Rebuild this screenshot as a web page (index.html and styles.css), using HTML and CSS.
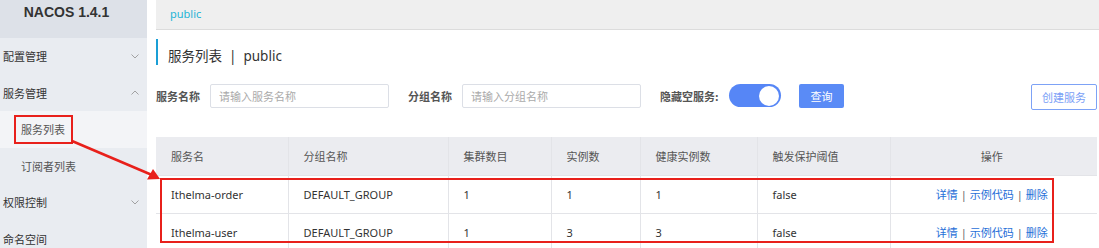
FILE: index.html
```html
<!DOCTYPE html>
<html lang="zh-CN">
<head>
    <meta charset="UTF-8">
    <title>Nacos 服务列表</title>
    <link rel="stylesheet" href="styles.css">
</head>
<body>
    <div class="page">
        <aside class="side">
            <div class="logo">NACOS 1.4.1</div>
            <ul class="menu">
                <li class="item">配置管理<svg class="chev" viewBox="0 0 8 5"><path d="M0.5 0.5 L4 4 L7.5 0.5"/></svg></li>
                <li class="item">服务管理<svg class="chev" viewBox="0 0 8 5"><path d="M0.5 4.5 L4 1 L7.5 4.5"/></svg></li>
                <li class="sub on">服务列表</li>
                <li class="sub">订阅者列表</li>
                <li class="item">权限控制<svg class="chev" viewBox="0 0 8 5"><path d="M0.5 0.5 L4 4 L7.5 0.5"/></svg></li>
                <li class="item">命名空间</li>
            </ul>
        </aside>
        <main class="main">
            <div class="topbar"><span class="ns">public</span></div>
            <h2 class="title">服务列表 &nbsp;|&nbsp; public</h2>
            <div class="filter">
                <label class="lbl">服务名称</label>
                <input class="ipt" type="text" placeholder="请输入服务名称">
                <label class="lbl lbl2">分组名称</label>
                <input class="ipt" type="text" placeholder="请输入分组名称">
                <label class="lbl lbl3">隐藏空服务:</label>
                <span class="switch"><span class="knob"></span></span>
                <button class="btn-query">查询</button>
                <button class="btn-create">创建服务</button>
            </div>
            <table class="grid">
                <colgroup>
                    <col style="width:132px">
                    <col style="width:160px">
                    <col style="width:103px">
                    <col style="width:89px">
                    <col style="width:117px">
                    <col style="width:133px">
                    <col>
                </colgroup>
                <thead>
                    <tr>
                        <th>服务名</th>
                        <th>分组名称</th>
                        <th>集群数目</th>
                        <th>实例数</th>
                        <th>健康实例数</th>
                        <th>触发保护阈值</th>
                        <th class="ops">操作</th>
                    </tr>
                </thead>
                <tbody>
                    <tr>
                        <td>Ithelma-order</td>
                        <td>DEFAULT_GROUP</td>
                        <td>1</td>
                        <td>1</td>
                        <td>1</td>
                        <td>false</td>
                        <td class="ops"><a>详情</a><i>|</i><a>示例代码</a><i>|</i><a>删除</a></td>
                    </tr>
                    <tr>
                        <td>Ithelma-user</td>
                        <td>DEFAULT_GROUP</td>
                        <td>1</td>
                        <td>3</td>
                        <td>3</td>
                        <td>false</td>
                        <td class="ops"><a>详情</a><i>|</i><a>示例代码</a><i>|</i><a>删除</a></td>
                    </tr>
                </tbody>
            </table>
        </main>
        <!-- 标注：红框和箭头 -->
        <svg class="marks" width="1099" height="248" viewBox="0 0 1099 248">
            <rect x="15" y="116" width="57" height="27" />
            <rect x="161" y="179" width="892" height="63" />
            <line x1="72" y1="141" x2="152" y2="175" />
            <path class="head" d="M160 179 L147 179.5 L153 169 Z"/>
        </svg>
    </div>
</body>
</html>
```

FILE: styles.css
```css
*{padding: 0;margin: 0;box-sizing: border-box;}
ul,li{list-style: none;}
body{
    font-family: "Noto Sans", "Noto Sans CJK SC", sans-serif;
    font-size: 11px;
    color: #333;
    background: #fff;
}
.page{
    position: relative;
    width: 1099px;
    height: 248px;
    overflow: hidden;
    display: flex;
}

/* 左侧菜单 */
.side{
    width: 147px;
    flex: none;
    background: #e9ecf1;
}
.logo{
    height: 38px;
    background: #dde1e8;
    text-align: center;
    font-family: "Liberation Sans", "Noto Sans", sans-serif;
    font-weight: bold;
    font-size: 14px;
    color: #333;
    padding: 4px 14px 0 0;
}
.menu li{
    height: 36.5px;
    display: flex;
    align-items: center;
    justify-content: space-between;
    font-family: "Noto Sans CJK SC", sans-serif;
    font-size: 11px;
    color: #333;
    padding: 0 8px 0 3px;
}
.menu .sub{
    padding-left: 21px;
    color: #555;
}
.menu .on{
    background: #f3f4f7;
}
.chev{
    width: 8px;
    height: 5px;
    fill: none;
    stroke: #999;
    stroke-width: 0.9;
}

/* 右侧主体 */
.main{
    flex: 1;
    padding: 0 2px 0 9px;
}
.topbar{
    height: 30px;
    background: #efefef;
    border-bottom: 1px solid #dcdcdc;
    padding: 6px 0 0 14px;
    margin-right: -2px;
}
.ns{
    color: #1db4d6;
    font-size: 11px;
}
.title{
    margin-top: 9px;
    height: 26px;
    border-left: 2px solid #1a9fd6;
    padding: 8px 0 0 10px;
    font-family: "Noto Sans", "Noto Sans CJK SC", sans-serif;
    font-weight: normal;
    font-size: 13.5px;
    line-height: 18px;
    color: #333;
}
.filter{
    margin-top: 19px;
    height: 26px;
    display: flex;
    align-items: flex-start;
}
.lbl{
    font-family: "Noto Sans CJK SC", sans-serif;
    font-weight: bold;
    font-size: 11px;
    color: #555;
    line-height: 24px;
    width: 54px;
    white-space: nowrap;
}
.lbl2{margin-left: 19px;}
.lbl3{margin-left: 19px;width: 69px;}
.ipt{
    width: 179px;
    height: 24px;
    border: 1px solid #dcdfe6;
    border-radius: 2px;
    padding: 0 8px;
    font-family: "Noto Sans CJK SC", sans-serif;
    font-size: 11px;
    outline: none;
}
.ipt::placeholder{color: #aaa;}
.switch{
    width: 52px;
    height: 23px;
    border-radius: 12px;
    background: #5686f6;
    display: flex;
    justify-content: flex-end;
    align-items: center;
    padding-right: 2px;
}
.knob{
    width: 20px;
    height: 20px;
    border-radius: 50%;
    background: #fff;
}
.btn-query{
    margin-left: 18px;
    width: 45px;
    height: 24px;
    border: none;
    border-radius: 2px;
    background: #5a8bf6;
    color: #fff;
    font-family: "Noto Sans CJK SC", sans-serif;
    font-size: 11px;
}
.btn-create{
    margin-left: auto;
    width: 66px;
    height: 26px;
    border: 1px solid #7da2f6;
    border-radius: 2px;
    background: #fff;
    color: #7aa0f6;
    font-family: "Noto Sans CJK SC", sans-serif;
    font-size: 11px;
}

/* 表格 */
.grid{
    margin-top: 27px;
    width: 941px;
    table-layout: fixed;
    border-collapse: collapse;
}
.grid th, .grid td{
    height: 38px;
    padding: 0 0 0 15px;
    text-align: left;
    font-size: 11px;
    border-left: 1px solid #e3e4e8;
    border-bottom: 1px solid #e3e4e8;
    white-space: nowrap;
}
.grid th{
    background: #ebecf0;
    font-family: "Noto Sans CJK SC", sans-serif;
    font-weight: normal;
    color: #555;
}
.grid td{color: #333;}
.grid th:first-child, .grid td:first-child{border-left: none;}
.grid .ops{
    text-align: center;
    padding: 0 4px 0 0;
}
.ops a{
    color: #1f6fd8;
    font-family: "Noto Sans CJK SC", sans-serif;
}
.ops i{
    font-style: normal;
    color: #666;
    margin: 0 3px;
}

/* 标注 */
.marks{
    position: absolute;
    left: 0;
    top: 0;
    pointer-events: none;
}
.marks rect{
    fill: none;
    stroke: #e8201b;
    stroke-width: 2;
}
.marks line{
    stroke: #e8201b;
    stroke-width: 2.5;
}
.marks .head{
    fill: #e8201b;
}
```
